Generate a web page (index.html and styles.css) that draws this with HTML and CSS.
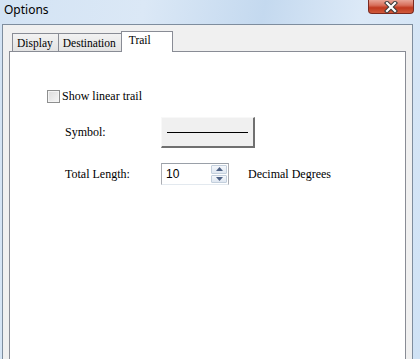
FILE: index.html
```html
<!DOCTYPE html>
<html lang="en">
<head>
    <meta charset="UTF-8">
    <title>Options</title>
    <link rel="stylesheet" href="styles.css">
</head>
<body>
    <div class="window">
        <div class="titlebar">
            <span class="title">Options</span>
            <div class="close">
                <svg width="18" height="12" viewBox="0 0 18 12">
                    <path d="M5 2 L13 10 M13 2 L5 10" stroke="#3b3b3b" stroke-width="4.2" stroke-linecap="square"/>
                    <path d="M5 2 L13 10 M13 2 L5 10" stroke="#ffffff" stroke-width="2.2" stroke-linecap="square"/>
                </svg>
            </div>
        </div>
        <div class="frame">
            <div class="tabs">
                <div class="tab">Display</div>
                <div class="tab">Destination</div>
                <div class="tab active">Trail</div>
            </div>
            <div class="panel">
                <div class="check-row">
                    <span class="checkbox"></span>
                    <span class="serif">Show linear trail</span>
                </div>
                <div class="field-row symbol-row">
                    <span class="field-label serif">Symbol:</span>
                    <div class="symbol-btn"><span class="symbol-line"></span></div>
                </div>
                <div class="field-row length-row">
                    <span class="field-label serif">Total Length:</span>
                    <div class="spin">
                        <span class="spin-value">10</span>
                        <div class="spin-btns">
                            <span class="spin-up">
                                <svg width="7" height="4" viewBox="0 0 7 4"><path d="M0 4 L3.5 0 L7 4 Z" fill="#4d6185"/></svg>
                            </span>
                            <span class="spin-down">
                                <svg width="7" height="4" viewBox="0 0 7 4"><path d="M0 0 L3.5 4 L7 0 Z" fill="#4d6185"/></svg>
                            </span>
                        </div>
                    </div>
                    <span class="unit serif">Decimal Degrees</span>
                </div>
            </div>
        </div>
    </div>
</body>
</html>
```

FILE: styles.css
```css
body {
    margin: 0;
    width: 420px;
    height: 359px;
    overflow: hidden;
}

.window {
    height: 359px;
    display: flex;
    flex-direction: column;
    background: linear-gradient(100deg, #d3e3f4 0%, #dbe8f6 30%, #c4d9ef 55%, #dce9f7 75%, #cfe2f5 100%);
}

.titlebar {
    height: 24px;
    display: flex;
    justify-content: space-between;
    align-items: flex-start;
    padding-left: 4px;
}

.title {
    font-family: "Noto Sans", sans-serif;
    font-size: 12px;
    line-height: 20px;
    color: #000;
}

.close {
    width: 44px;
    height: 13px;
    margin-right: 6px;
    border: 1px solid #7b2a20;
    border-top: none;
    border-radius: 0 0 4px 4px;
    background: linear-gradient(#e8a496 0%, #d8705c 40%, #c0391f 60%, #cf5a3c 100%);
    display: flex;
    justify-content: center;
    align-items: center;
}

.frame {
    flex: 1;
    margin: 0 7px 0 2px;
    border: 1px solid #7e8d9e;
    border-bottom: none;
    background: #f0f0f0;
    display: flex;
    flex-direction: column;
    padding-top: 6px;
}

.serif {
    font-family: "Liberation Serif", "DejaVu Serif", serif;
    font-size: 12px;
}

.tabs {
    display: flex;
    align-items: flex-end;
    height: 20px;
    padding-left: 9px;
    font-family: "Liberation Serif", serif;
    font-size: 11.5px;
    color: #000;
}

.tab {
    height: 17px;
    line-height: 18px;
    padding: 0 5px 0 4px;
    border: 1px solid #898c95;
    border-bottom: none;
    margin-right: -1px;
    background: linear-gradient(#f2f2f2, #e3e3e3);
}

.tab.active {
    height: 20px;
    line-height: 16px;
    padding: 0 21px 0 7px;
    margin-bottom: -1px;
    background: #fff;
    position: relative;
    z-index: 1;
}

.panel {
    flex: 1;
    margin: 0 6px;
    border: 1px solid #898c95;
    border-bottom: none;
    background: #fff;
    padding: 37px 0 0 37px;
    color: #000;
}

.check-row {
    display: flex;
    align-items: center;
    gap: 2px;
    height: 14px;
}

.checkbox {
    width: 11px;
    height: 11px;
    border: 1px solid #8e8f8f;
    background: linear-gradient(135deg, #dcdcdc, #f6f6f6);
    box-shadow: inset 0 0 0 1px #f4f4f4;
}

.field-row {
    display: flex;
    align-items: center;
    padding-left: 18px;
}

.symbol-row {
    margin-top: 14px;
}

.length-row {
    margin-top: 15px;
}

.field-label {
    width: 96px;
}

.symbol-btn {
    width: 91px;
    height: 28px;
    background: #f0f0f0;
    border-top: 1px solid #f8f8f8;
    border-left: 1px solid #f8f8f8;
    border-right: 2px solid #707070;
    border-bottom: 2px solid #707070;
    display: flex;
    justify-content: center;
    align-items: center;
}

.symbol-line {
    width: 81px;
    height: 1px;
    background: #000;
    margin-top: 1px;
}

.spin {
    width: 66px;
    height: 20px;
    border: 1px solid #abadb3;
    border-top-color: #9aa0a8;
    border-bottom-color: #e3e9ef;
    display: flex;
    justify-content: space-between;
    align-items: stretch;
}

.spin-value {
    padding-left: 4px;
    line-height: 20px;
    font-family: "Liberation Sans", sans-serif;
    font-size: 12px;
}

.spin-btns {
    width: 16px;
    display: flex;
    flex-direction: column;
    gap: 1px;
    padding: 1px 1px 1px 0;
}

.spin-up, .spin-down {
    flex: 1;
    border: 1px solid #c3cfdc;
    border-radius: 1px;
    background: linear-gradient(#f4f7fb, #dfe7f1);
    display: flex;
    justify-content: center;
    align-items: center;
}

.unit {
    margin-left: 19px;
}
```
